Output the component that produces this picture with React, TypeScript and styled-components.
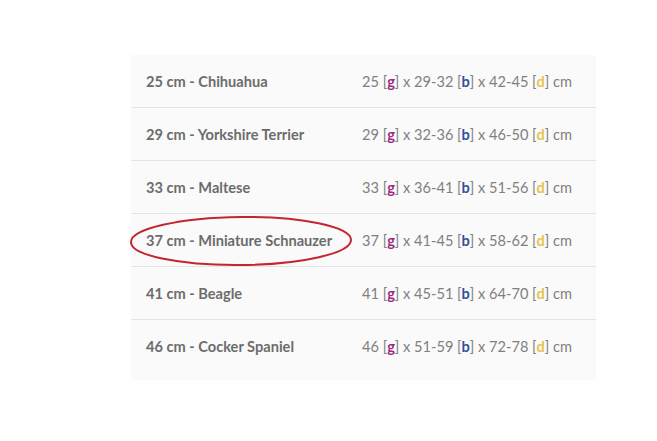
import styled, { createGlobalStyle } from "styled-components";

const GlobalStyle = createGlobalStyle`
  html, body {
    margin: 0;
    padding: 0;
    background: #ffffff;
  }
  body {
    font-family: Lato, "Open Sans", sans-serif;
  }
`;

const Page = styled.div`
  width: 657px;
  height: 441px;
  padding: 55px 0 0 131px;
  box-sizing: border-box;
`;

const Table = styled.div`
  width: 465px;
  background: #fafafa;
  display: flex;
  flex-direction: column;
`;

const Row = styled.div<{ $last?: boolean }>`
  height: 52px;
  display: grid;
  grid-template-columns: 231px 1fr;
  align-items: center;
  border-bottom: ${(p) => (p.$last ? "none" : "1px solid #e4e4e4")};
  padding-bottom: ${(p) => (p.$last ? 8 : 0)}px;
`;

const Breed = styled.div`
  position: relative;
  padding-left: 15px;
  font-size: 14.6px;
  font-weight: 700;
  color: #6c6c6c;
`;

const Dims = styled.div`
  font-size: 14.6px;
  color: #808080;
  white-space: nowrap;
`;

const Tag = styled.b<{ $c: string }>`
  color: ${(p) => p.$c};
  font-weight: 700;
`;

const Circle = styled.svg`
  position: absolute;
  left: -2px;
  top: -17px;
  width: 226px;
  height: 52px;
  overflow: visible;
  pointer-events: none;
`;

const tagColors = { g: "#9b2a7e", b: "#34509a", d: "#e8c34a" };

interface IDog {
  cm: number;
  name: string;
  g: string;
  b: string;
  d: string;
  marked?: boolean;
}

const dogs: IDog[] = [
  { cm: 25, name: "Chihuahua", g: "25", b: "29-32", d: "42-45" },
  { cm: 29, name: "Yorkshire Terrier", g: "29", b: "32-36", d: "46-50" },
  { cm: 33, name: "Maltese", g: "33", b: "36-41", d: "51-56" },
  { cm: 37, name: "Miniature Schnauzer", g: "37", b: "41-45", d: "58-62", marked: true },
  { cm: 41, name: "Beagle", g: "41", b: "45-51", d: "64-70" },
  { cm: 46, name: "Cocker Spaniel", g: "46", b: "51-59", d: "72-78" },
];

export default function App() {
  return (
    <Page>
      <GlobalStyle />
      <Table>
        {dogs.map((dog, i) => (
          <Row key={dog.cm} $last={i === dogs.length - 1}>
            <Breed>
              {dog.cm} cm - {dog.name}
              {dog.marked && (
                <Circle viewBox="0 0 226 52">
                  <ellipse
                    cx="112"
                    cy="26"
                    rx="110"
                    ry="24"
                    fill="none"
                    stroke="#c3262e"
                    strokeWidth="2"
                    transform="rotate(-0.6 112 26)"
                  />
                </Circle>
              )}
            </Breed>
            <Dims>
              {dog.g} [<Tag $c={tagColors.g}>g</Tag>] x {dog.b} [
              <Tag $c={tagColors.b}>b</Tag>] x {dog.d} [
              <Tag $c={tagColors.d}>d</Tag>] cm
            </Dims>
          </Row>
        ))}
      </Table>
    </Page>
  );
}
